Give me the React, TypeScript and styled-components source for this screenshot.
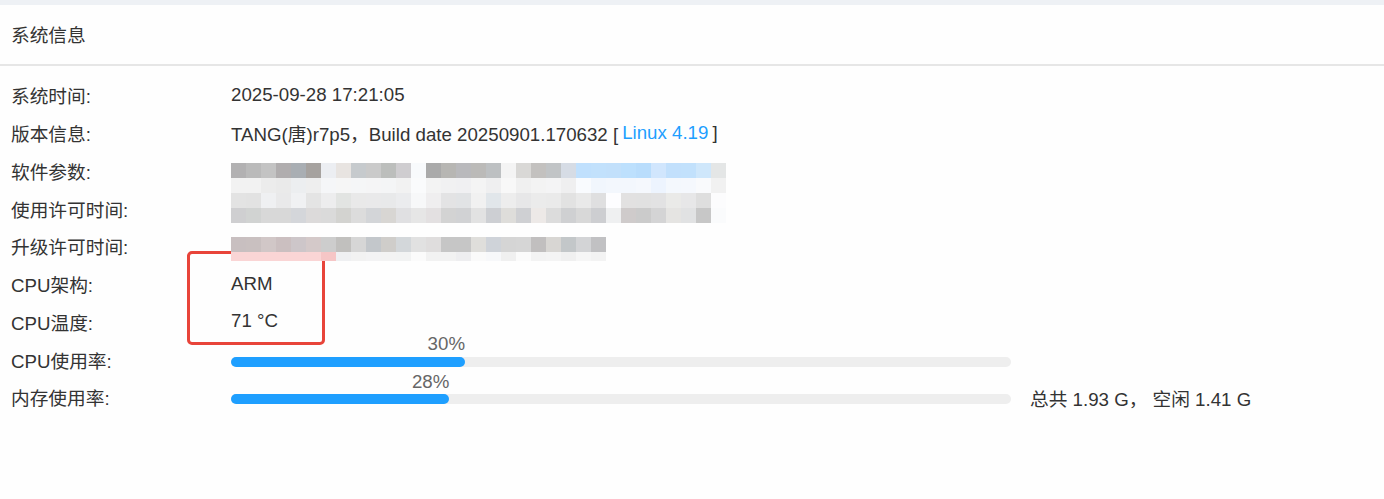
import React from 'react';
import styled, { createGlobalStyle } from 'styled-components';

const GlobalStyle = createGlobalStyle`
  html, body {
    margin: 0;
    padding: 0;
    background: #eef1f5;
  }
  body {
    font-family: "Liberation Sans", "Noto Sans CJK SC", sans-serif;
    color: #333;
  }
`;

// pixelated (redacted) blocks, one array per mosaic row
const mosaicA: string[][] = [
  ['#b2b1b2', '#bababa', '#c3c3c3', '#b0adae', '#a9aeb3', '#a6a29f', '#eceef2', '#e8e4e1', '#c6cacd', '#cacaca', '#bcbebc', '#cfcdd0', '#f8fafc', '#aaaaaa', '#b7b6b3', '#b9b9bc', '#bbbab8', '#bdc0c2', '#f4f4f4', '#d9d8d6', '#c3c1bf', '#c1c4c6', '#d6dce5', '#c0e0fd', '#c2e1fc', '#c2e0fb', '#bde0fd', '#b9ddfc', '#d1e6fd', '#c2e0fc', '#c2e1fc', '#cfe7fb', '#e4e6e6'],
  ['#f2f2f2', '#f2f2f2', '#ececec', '#eaeaea', '#eceef0', '#eeeeee', '#f5f6f8', '#f6f6f6', '#f5f6f7', '#f5f5f6', '#f4f5f6', '#f2f2f2', '#fafbfc', '#f3f3f3', '#f1f1f2', '#f0f0f2', '#f4f4f4', '#efeff0', '#f8f8f8', '#f0f0f0', '#f3f3f3', '#f4f4f5', '#efeff0', '#f9fbfe', '#f1f6fd', '#f3f7fd', '#f3f7fd', '#f5f8fd', '#edf4fe', '#f4f8fd', '#f5f8fd', '#f9fafc', '#f1f1f1'],
  ['#e3e3e3', '#e2e2e2', '#eff0f2', '#e9e9ea', '#f0f1f3', '#e4e4e4', '#ededee', '#e2e4e2', '#e9e9e9', '#e9e9ea', '#e8e9ea', '#ebecee', '#f7f8f9', '#efeeef', '#e3e3e4', '#e1e3e5', '#f1f1f1', '#e1e6ea', '#ededed', '#e7e7e8', '#ebebeb', '#eaeaea', '#e2e2e2', '#e9e9e9', '#dfdfe0', '#fdfdff', '#e2e1e1', '#e1e1e1', '#e2e2e3', '#eaeae8', '#e7e7e8', '#dedede', '#fcfcfd'],
  ['#cfcfd1', '#d1d3d2', '#d8d8d8', '#d8d8d8', '#d4d6da', '#dcdada', '#dadada', '#d3d3d0', '#dcdcdc', '#d3d5d8', '#d8d6d3', '#e0e0e2', '#e6e6e6', '#e3e0e1', '#d3d3d3', '#d1d2d4', '#e2e2e2', '#cdcfd3', '#deddda', '#cfd0d3', '#ede9e7', '#dcdcdc', '#cfd0d2', '#d8d8d8', '#cdced1', '#eff0f1', '#cfcbcb', '#cbcbcb', '#d4d4d5', '#e5e4e2', '#e1e2e3', '#c7c7c7', '#fafbfc'],
];

const mosaicB: string[][] = [
  ['#c8bfc0', '#c9c0c0', '#d1c7c7', '#cbbfc0', '#cdc6c9', '#d4c9c9', '#cdcdcd', '#c1c0be', '#d6d6d6', '#c3c7cb', '#cfcdca', '#d3d7da', '#e1e1e1', '#dfdddd', '#c6c6c6', '#c6c6c6', '#dfdedb', '#cfd3d9', '#d5d5d5', '#d6d6d6', '#c1bfbf', '#d8d6d3', '#c3c7c9', '#d3d4d6', '#c1c1c3'],
  ['#fad5d5', '#fad5d5', '#fad5d5', '#fad5d5', '#fad5d5', '#fad5d5', '#f6c6c6', '#eff0f2', '#f2f2f2', '#f3f3f4', '#f3f3f3', '#f2f3f3', '#fbfbfb', '#f2f2f2', '#f2f2f2', '#eeeef0', '#fafafa', '#f7f8fa', '#f0f0f0', '#fbfbfb', '#f3f3f3', '#f4f4f4', '#f0f0f0', '#f6f6f6', '#f3f3f3'],
];

const Card = styled.div`
  margin-top: 5px;
  background: #fefefe;
  min-height: 494px;
`;

const CardHeader = styled.div`
  height: 56px;
  display: flex;
  align-items: center;
  padding: 0 11px 3px;
  font-size: 18.7px;
  color: #333;
  border-bottom: 2px solid #e6e6e6;
`;

const CardBody = styled.div`
  position: relative;
  padding: 10px 11px 0;
  display: grid;
  grid-template-columns: 220px 1fr;
  grid-auto-rows: 37.75px;
  font-size: 18.7px;
`;

const Label = styled.div`
  display: flex;
  align-items: center;
  white-space: nowrap;
  color: #333;
`;

const Value = styled.div<{ $span?: number; $top?: number }>`
  display: flex;
  align-items: ${(p) => (p.$top !== undefined ? 'flex-start' : 'center')};
  padding-top: ${(p) => p.$top ?? 0}px;
  grid-row: ${(p) => (p.$span ? `span ${p.$span}` : 'auto')};
  white-space: nowrap;
  color: #333;
`;

const Link = styled.a`
  color: #1e9fff;
  text-decoration: none;
  margin: 0 4px;
`;

const Mosaic = styled.div`
  position: relative;
  z-index: 2;
  display: flex;
  flex-direction: column;
`;

const MosaicRow = styled.div<{ $h: number }>`
  display: flex;
  height: ${(p) => p.$h}px;
`;

const Pixel = styled.span<{ $c: string }>`
  width: 15px;
  height: 100%;
  background: ${(p) => p.$c};
`;

const Highlight = styled.div`
  position: absolute;
  z-index: 1;
  left: 187px;
  top: 185px;
  width: 138px;
  height: 94px;
  box-sizing: border-box;
  border: 3px solid #e8443a;
  border-radius: 5px;
  pointer-events: none;
`;

const ProgressWrap = styled.div`
  display: flex;
  align-items: center;
  gap: 19px;
  padding-top: 5px;
`;

const Track = styled.div`
  position: relative;
  width: 780px;
  height: 10px;
  border-radius: 20px;
  background: #eeeeee;
`;

const Fill = styled.div`
  position: relative;
  height: 100%;
  border-radius: 20px;
  background: #1e9fff;
`;

const Percent = styled.span`
  position: absolute;
  right: 0;
  bottom: 100%;
  margin-bottom: 3px;
  color: #666;
  line-height: 1;
`;

const Summary = styled.span`
  color: #333;
  margin-top: -3px;
`;

const MosaicBlock: React.FC<{ rows: string[][]; heights: number[] }> = ({ rows, heights }) => (
  <Mosaic>
    {rows.map((row, i) => (
      <MosaicRow key={i} $h={heights[i]}>
        {row.map((c, j) => (
          <Pixel key={j} $c={c} />
        ))}
      </MosaicRow>
    ))}
  </Mosaic>
);

const Progress: React.FC<{ percent: number; extra?: string }> = ({ percent, extra }) => (
  <ProgressWrap>
    <Track>
      <Fill style={{ width: `${percent}%` }}>
        <Percent>{percent}%</Percent>
      </Fill>
    </Track>
    {extra && <Summary>{extra}</Summary>}
  </ProgressWrap>
);

export default function App() {
  return (
    <>
      <GlobalStyle />
      <Card>
        <CardHeader>系统信息</CardHeader>
        <CardBody>
          <Label>系统时间:</Label>
          <Value>2025-09-28 17:21:05</Value>

          <Label>版本信息:</Label>
          <Value>
            TANG(唐)r7p5，Build date 20250901.170632 [<Link>Linux 4.19</Link>]
          </Value>

          <Label>软件参数:</Label>
          <Value $span={2} $top={11}>
            <MosaicBlock rows={mosaicA} heights={[15, 15, 15, 15]} />
          </Value>
          <Label>使用许可时间:</Label>

          <Label>升级许可时间:</Label>
          <Value $top={10}>
            <MosaicBlock rows={mosaicB} heights={[15, 9]} />
          </Value>

          <Label>CPU架构:</Label>
          <Value>ARM</Value>

          <Label>CPU温度:</Label>
          <Value>71 °C</Value>

          <Label>CPU使用率:</Label>
          <Value>
            <Progress percent={30} />
          </Value>

          <Label>内存使用率:</Label>
          <Value>
            <Progress percent={28} extra="总共 1.93 G， 空闲 1.41 G" />
          </Value>

          <Highlight />
        </CardBody>
      </Card>
    </>
  );
}
